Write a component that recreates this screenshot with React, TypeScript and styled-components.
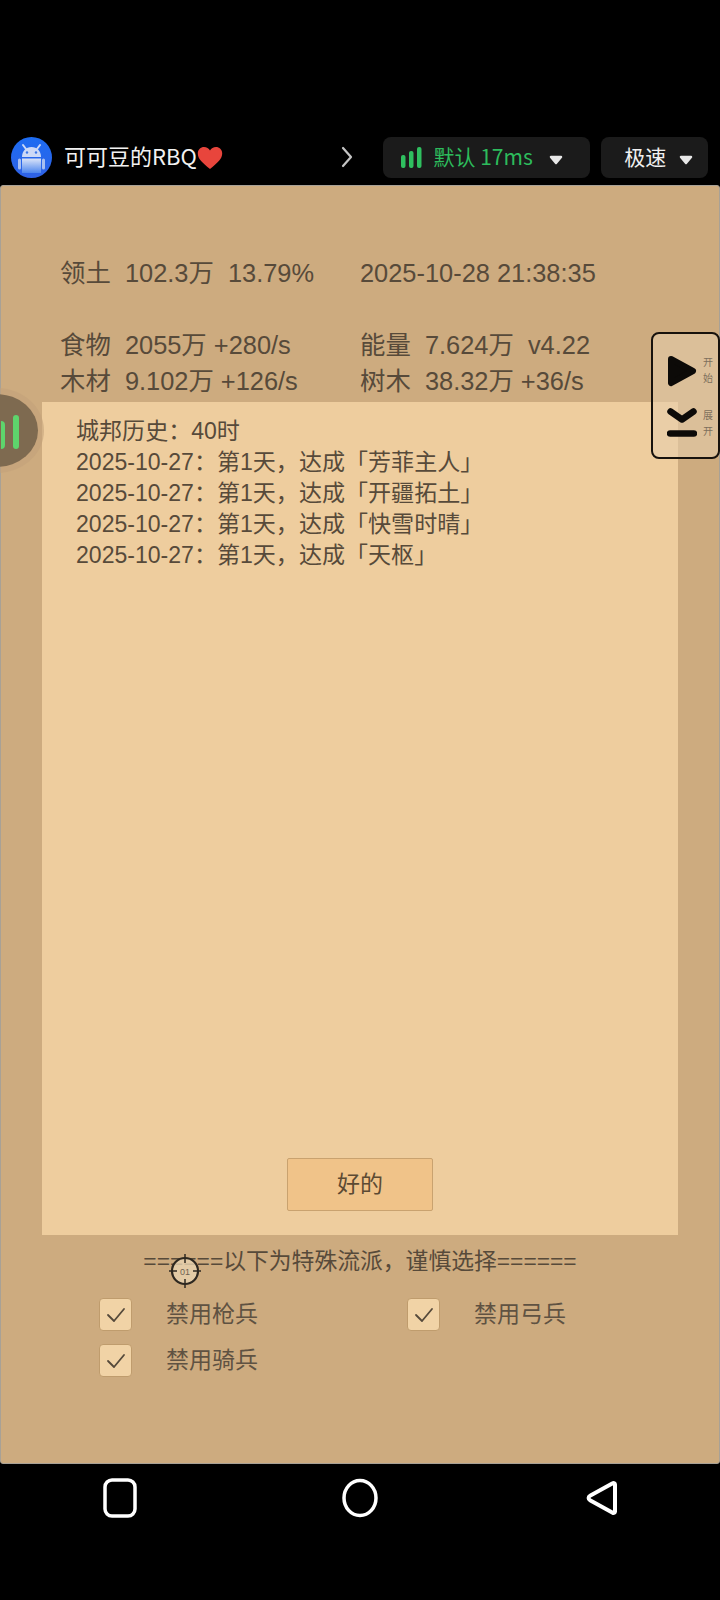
import React from "react";
import styled, { createGlobalStyle } from "styled-components";

const stat_rows = [
  ["领土  102.3万  13.79%", "2025-10-28 21:38:35"],
  ["\u00a0", "\u00a0"],
  ["食物  2055万 +280/s", "能量  7.624万  v4.22"],
  ["木材  9.102万 +126/s", "树木  38.32万 +36/s"],
];

const history = [
  "城邦历史：40时",
  "2025-10-27：第1天，达成「芳菲主人」",
  "2025-10-27：第1天，达成「开疆拓土」",
  "2025-10-27：第1天，达成「快雪时晴」",
  "2025-10-27：第1天，达成「天枢」",
];

const options = ["禁用枪兵", "禁用弓兵", "禁用骑兵"];

const Caret = () => (
  <CaretIcon width="14" height="10" viewBox="0 0 14 10">
    <path d="M2 2h10L7 8z" fill="#e8e8e8" stroke="#e8e8e8" strokeWidth="2.500" strokeLinejoin="round" />
  </CaretIcon>
);

const App = () => {
  return (
    <Screen>
      <GlobalStyle />
      <TopBar>
        <Avatar>
          <svg width="41" height="41" viewBox="0 0 41 41">
            <defs>
              <linearGradient id="av" x1="0" y1="0" x2="0" y2="1">
                <stop offset="0" stopColor="#1d6cf2" />
                <stop offset="1" stopColor="#2f62e6" />
              </linearGradient>
              <linearGradient id="bot" x1="0" y1="0" x2="0" y2="1">
                <stop offset="0" stopColor="#dbe4f8" />
                <stop offset="1" stopColor="#4d86ee" />
              </linearGradient>
            </defs>
            <circle cx="20.500" cy="20.500" r="20.500" fill="url(#av)" />
            <path d="M11 20c0-6 4-10 9.500-10S30 14 30 20z" fill="#ccd9f6" />
            <path d="M12 8l3 4M29 8l-3 4" stroke="#ccd9f6" strokeWidth="2" strokeLinecap="round" />
            <circle cx="16" cy="15.500" r="1.200" fill="#3a76e8" />
            <circle cx="25" cy="15.500" r="1.200" fill="#3a76e8" />
            <path d="M11 21.500h19V36H11z" fill="url(#bot)" />
            <path d="M8.500 23v8M32.500 23v8" stroke="#a9c0f1" strokeWidth="3" strokeLinecap="round" />
          </svg>
        </Avatar>
        <Title>
          可可豆的RBQ
          <svg width="26" height="24" viewBox="0 0 26 24">
            <path d="M13 23C5 16.500 0.800 12.600 0.800 7.500 0.800 3.600 3.800 1 7 1c2.600 0 4.800 1.400 6 3.600C14.200 2.400 16.400 1 19 1c3.200 0 6.200 2.600 6.200 6.500C25.200 12.600 21 16.500 13 23z" fill="#e8453c" />
          </svg>
        </Title>
        <Chevron width="12" height="22" viewBox="0 0 12 22">
          <path d="M2 2l8 9-8 9" fill="none" stroke="#c4c4c4" strokeWidth="2.200" strokeLinecap="round" strokeLinejoin="round" />
        </Chevron>
        <LinePill>
          <svg width="22" height="21" viewBox="0 0 22 21">
            <rect x="0" y="8" width="4.500" height="13" rx="2" fill="#2fbf5f" />
            <rect x="8" y="4" width="4.500" height="17" rx="2" fill="#2fbf5f" />
            <rect x="16" y="0" width="4.500" height="21" rx="2" fill="#2fbf5f" />
          </svg>
          <LineText>默认 17ms</LineText>
          <Caret />
        </LinePill>
        <SpeedPill>
          <SpeedText>极速</SpeedText>
          <Caret />
        </SpeedPill>
      </TopBar>

      <GamePanel>
        <StatGrid>
          {stat_rows.map((row, index) => (
            <React.Fragment key={index}>
              <Stat>{row[0]}</Stat>
              <Stat>{row[1]}</Stat>
            </React.Fragment>
          ))}
        </StatGrid>

        <Modal>
          <HistoryList>
            {history.map((line, index) => (
              <div key={index}>{line}</div>
            ))}
          </HistoryList>
          <OkButton>好的</OkButton>
        </Modal>

        <Notice>======以下为特殊流派，谨慎选择======</Notice>
        <OptionGrid>
          {options.map((name) => (
            <Option key={name}>
              <CheckBox>
                <svg width="20" height="16" viewBox="0 0 20 16">
                  <path d="M2 8l6 6L18 2" fill="none" stroke="#55493a" strokeWidth="1.800" strokeLinecap="round" strokeLinejoin="round" />
                </svg>
              </CheckBox>
              <OptionName>{name}</OptionName>
            </Option>
          ))}
        </OptionGrid>

        <SideBubble>
          <svg width="20" height="36" viewBox="0 0 20 36">
            <rect x="-6" y="8" width="10" height="28" rx="4" fill="#5ed46c" />
            <rect x="12" y="2" width="6" height="34" rx="3" fill="#5ed46c" />
          </svg>
        </SideBubble>

        <FloatPanel>
          <FloatRow>
            <svg width="30" height="32" viewBox="0 0 30 32">
              <path d="M4 4l22 12L4 28z" fill="#0c0a08" stroke="#0c0a08" strokeWidth="6" strokeLinejoin="round" />
            </svg>
            <FloatLabel>开始</FloatLabel>
          </FloatRow>
          <FloatRow>
            <svg width="30" height="32" viewBox="0 0 30 32">
              <path d="M3.500 3.500l11.500 8 11.500-8" fill="none" stroke="#0c0a08" strokeWidth="6.500" strokeLinecap="round" strokeLinejoin="round" />
              <path d="M3 25.500h24" stroke="#0c0a08" strokeWidth="6.500" strokeLinecap="round" />
            </svg>
            <FloatLabel>展开</FloatLabel>
          </FloatRow>
        </FloatPanel>

        <Crosshair>
          <svg width="34" height="34" viewBox="0 0 34 34">
            <circle cx="17" cy="17" r="13" fill="#e9d3b0" fillOpacity="0.8" stroke="#2e2820" strokeWidth="2.200" />
            <path d="M17 0v9M17 25v9M1 17h8M25 17h8" stroke="#2e2820" strokeWidth="1.500" />
            <text x="17" y="20.500" textAnchor="middle" fontSize="9" fontFamily="Liberation Sans" fill="#6e6252">01</text>
          </svg>
        </Crosshair>
      </GamePanel>

      <NavBar>
        <svg width="34" height="40" viewBox="0 0 34 40">
          <rect x="2" y="2" width="30" height="36" rx="7" fill="none" stroke="#fff" strokeWidth="3.500" />
        </svg>
        <svg width="38" height="40" viewBox="0 0 38 40">
          <ellipse cx="19" cy="20" rx="16" ry="17.500" fill="none" stroke="#fff" strokeWidth="3.500" />
        </svg>
        <svg width="38" height="40" viewBox="0 0 38 40">
          <path d="M34 6.500v27a1.500 1.500 0 0 1-2.300 1.300L9 22.300a2.600 2.600 0 0 1 0-4.600L31.700 5.200A1.500 1.500 0 0 1 34 6.500z" fill="none" stroke="#fff" strokeWidth="4" strokeLinejoin="round" />
        </svg>
      </NavBar>
    </Screen>
  );
};

const GlobalStyle = createGlobalStyle`
  html, body {
    margin: 0;
    padding: 0;
    background: #000;
  }
  * {
    box-sizing: border-box;
  }
`;

const Screen = styled.div`
  width: 720px;
  height: 1600px;
  padding-top: 136px;
  background: #000;
  display: flex;
  flex-direction: column;
  overflow: hidden;
  font-family: "Liberation Sans", "Noto Sans CJK SC", sans-serif;
`;

const TopBar = styled.div`
  height: 42px;
  padding: 0 12px 0 11px;
  display: flex;
  align-items: center;
`;

const Avatar = styled.div`
  width: 41px;
  height: 41px;
  flex-shrink: 0;
  svg {
    display: block;
  }
`;

const Title = styled.div`
  margin-left: 12px;
  width: 277px;
  padding-bottom: 4px;
  display: flex;
  align-items: center;
  font-family: "Noto Sans CJK SC", sans-serif;
  font-size: 22px;
  color: #f2f2f2;
  svg {
    margin-top: 5px;
  }
`;

const Chevron = styled.svg`
  flex-shrink: 0;
`;

const Pill = styled.div`
  height: 41px;
  background: #1b1b1b;
  border-radius: 8px;
  display: flex;
  align-items: center;
`;

const LinePill = styled(Pill)`
  width: 208px;
  margin-left: 30px;
  padding-left: 18px;
`;

const SpeedPill = styled(Pill)`
  width: 107px;
  margin-left: 11px;
  padding-left: 23px;
`;

const LineText = styled.span`
  margin-left: 11px;
  width: 115px;
  padding-bottom: 2px;
  font-family: "Noto Sans CJK SC", sans-serif;
  font-size: 21px;
  white-space: nowrap;
  color: #2dbb5c;
`;

const SpeedText = styled.span`
  width: 55px;
  padding-bottom: 2px;
  font-family: "Noto Sans CJK SC", sans-serif;
  font-size: 21px;
  color: #f0f0f0;
`;

const CaretIcon = styled.svg`
  display: block;
  margin-top: 6px;
`;

const GamePanel = styled.div`
  position: relative;
  margin-top: 7px;
  height: 1279px;
  padding-top: 69px;
  background: #cdab7f;
  border: 1px solid #a8a196;
  border-radius: 3px;
  color: #574a3a;
`;

const StatGrid = styled.div`
  display: grid;
  grid-template-columns: 300px 1fr;
  padding-left: 59px;
`;

const Stat = styled.div`
  font-size: 25.400px;
  line-height: 36px;
  white-space: pre;
`;

const Modal = styled.div`
  width: 636px;
  height: 833px;
  margin: 3px 0 0 41px;
  padding: 14px 0 24px;
  background: #eecd9e;
  display: flex;
  flex-direction: column;
  align-items: center;
`;

const HistoryList = styled.div`
  flex: 1;
  width: 100%;
  padding-left: 34px;
  font-size: 23.050px;
  line-height: 31.100px;
`;

const OkButton = styled.div`
  width: 146px;
  height: 53px;
  padding-bottom: 5px;
  background: #f0c389;
  border: 1px solid #c9a26f;
  border-radius: 2px;
  display: flex;
  align-items: center;
  justify-content: center;
  font-size: 23px;
  color: #5c4a33;
`;

const Notice = styled.div`
  margin-top: 10px;
  text-align: center;
  font-size: 22.800px;
  line-height: 32px;
`;

const OptionGrid = styled.div`
  display: grid;
  grid-template-columns: 308px 1fr;
  row-gap: 13px;
  margin-top: 21px;
  padding-left: 98px;
`;

const Option = styled.div`
  display: flex;
  align-items: center;
  gap: 34px;
  font-size: 23px;
  color: #5f5242;
`;

const OptionName = styled.span`
  margin-bottom: 2px;
  line-height: 28px;
`;

const CheckBox = styled.div`
  width: 33px;
  height: 33px;
  background: #f1d3a6;
  border: 1.500px solid #bf9c6d;
  border-radius: 4px;
  display: flex;
  align-items: center;
  justify-content: center;
`;

const SideBubble = styled.div`
  position: absolute;
  left: -46px;
  top: 208px;
  width: 83px;
  height: 73px;
  padding-left: 46px;
  border-radius: 50%;
  background: #7e6a50;
  box-shadow: 0 0 0 6px rgba(195, 162, 122, 0.6);
  display: flex;
  align-items: center;
  svg {
    overflow: hidden;
  }
`;

const FloatPanel = styled.div`
  position: absolute;
  right: -1px;
  top: 146px;
  width: 69px;
  height: 127px;
  padding: 21px 0 0 14px;
  background: rgba(232, 208, 174, 0.55);
  border: 2px solid #17120d;
  border-radius: 8px;
  display: flex;
  flex-direction: column;
  gap: 21px;
`;

const FloatRow = styled.div`
  display: flex;
  align-items: center;
  gap: 6px;
`;

const FloatLabel = styled.div`
  width: 10px;
  font-size: 10px;
  line-height: 16px;
  color: #7d6f5c;
`;

const Crosshair = styled.div`
  position: absolute;
  left: 167px;
  top: 1068px;
  width: 34px;
  height: 34px;
`;

const NavBar = styled.div`
  flex: 1;
  display: grid;
  grid-template-columns: repeat(3, 1fr);
  justify-items: center;
  align-items: center;
  padding-bottom: 68px;
`;

export default App;
